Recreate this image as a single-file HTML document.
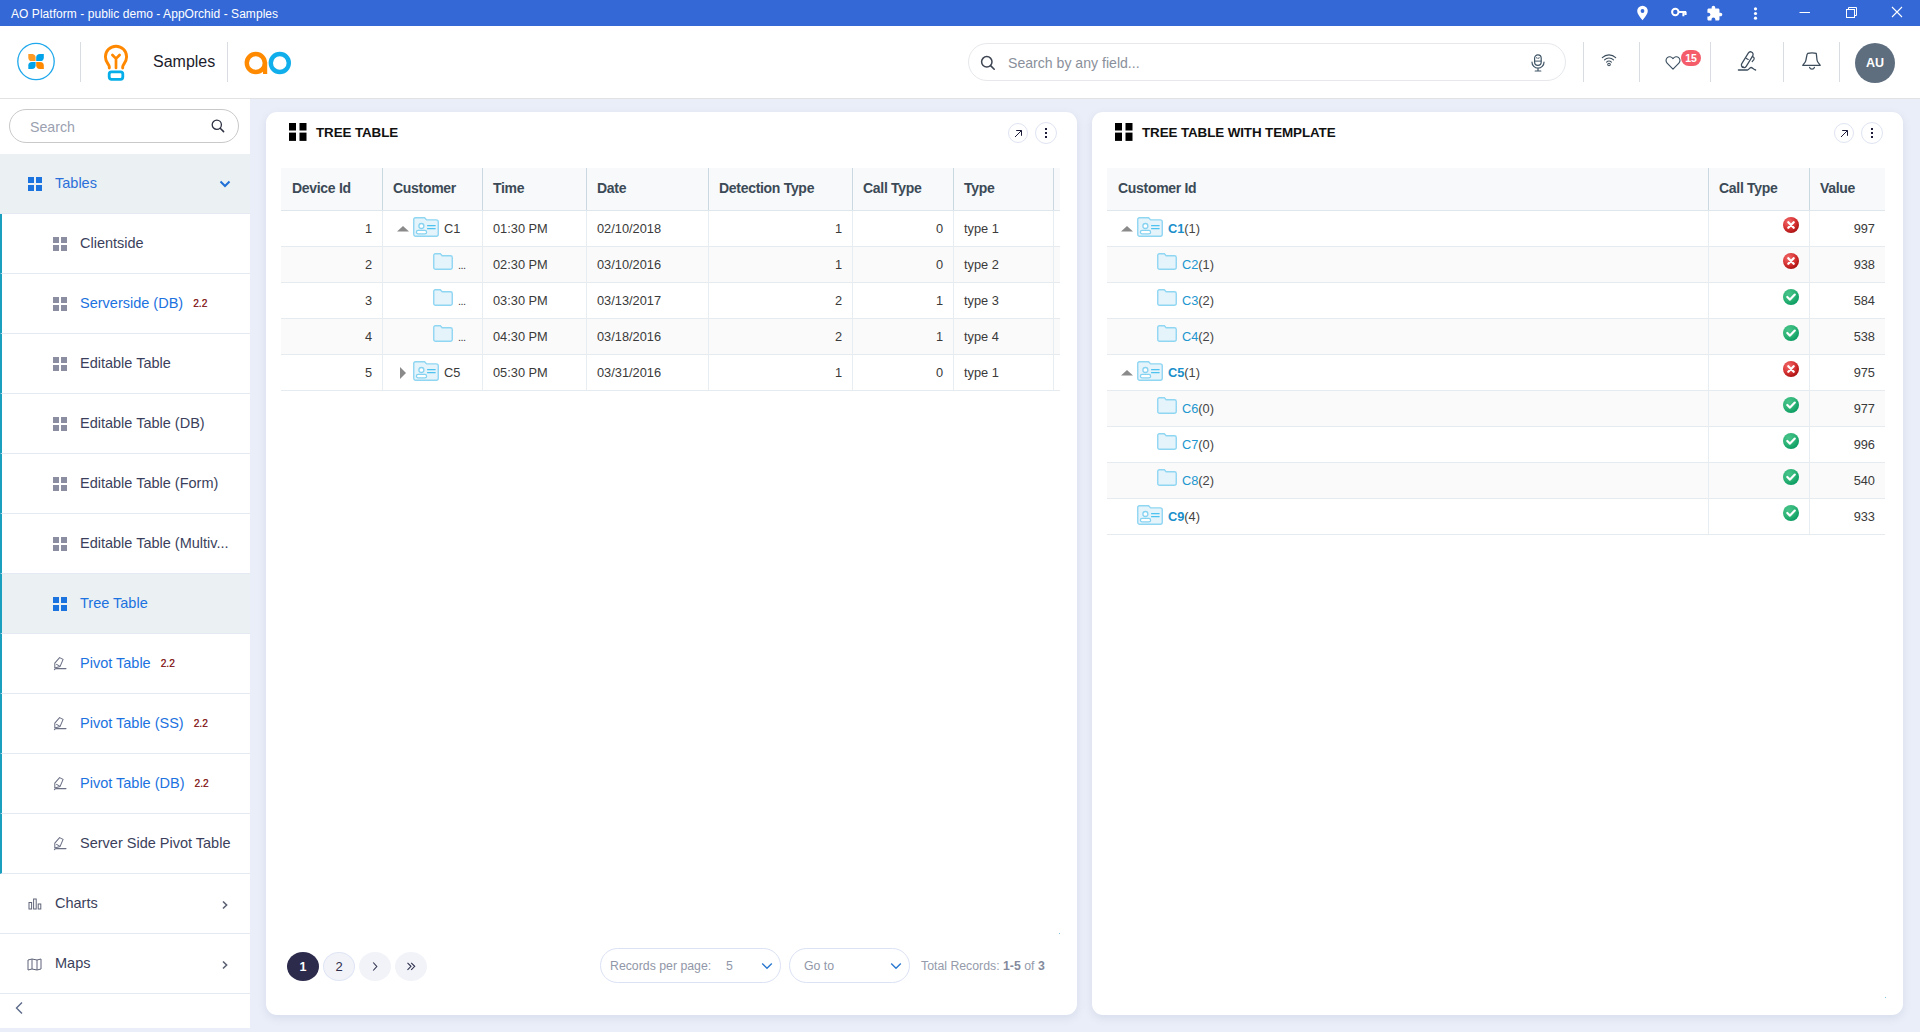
<!DOCTYPE html>
<html><head><meta charset="utf-8">
<style>
*{box-sizing:border-box;margin:0;padding:0}
html,body{width:1920px;height:1032px;overflow:hidden}
body{position:relative;background:#eaeef8;font-family:"Liberation Sans",sans-serif;color:#333}
.abs{position:absolute}
svg{display:block}
/* titlebar */
#tb{position:absolute;left:0;top:0;width:1920px;height:26px;background:#3468d6}
#tb .t{position:absolute;left:11px;top:1px;line-height:26px;font-size:12px;color:#fff;letter-spacing:0.05px}
/* header */
#hd{position:absolute;left:0;top:26px;width:1920px;height:73px;background:#fff;border-bottom:1px solid #e1e2e4}
.vdiv{position:absolute;top:16px;width:1px;height:40px;background:#d9dde2}
/* sidebar */
#sb{position:absolute;left:0;top:99px;width:250px;height:929px;background:#fff}
.si{position:absolute;left:0;width:250px;height:60px;border-bottom:1px solid #e5e9f2;background:#fff}
.si.sub{border-left:2px solid #1a9fbf}
.si .tx{position:absolute;left:80px;top:0;line-height:59px;font-size:14.5px;color:#3b3f5c;white-space:nowrap}
.si .tx.bl{color:#1b72e0}
.si .badge{font-size:10.2px;font-weight:normal;color:#7a0505;margin-left:10px;position:relative;top:-1px;-webkit-text-stroke:0.2px #7a0505}
.si .ic{position:absolute;left:53px;top:23px}
/* cards */
.card{position:absolute;top:112px;width:811px;height:903px;background:#fff;border-radius:11px;box-shadow:0 3px 9px rgba(100,110,170,0.14)}
.card .title{position:absolute;left:50px;top:0;line-height:42px;font-size:13.4px;font-weight:bold;color:#111;letter-spacing:-0.1px}
.abtn{position:absolute;top:10px;width:21px;height:21px;border:1px solid #dfe4f2;border-radius:50%}
/* tables */
.tbl{position:absolute;top:56px}
.th{position:absolute;top:0;height:43px;background:#f7f9fa;border-bottom:1px solid #e0e7ec}
.th .c{position:absolute;top:0;height:42px;border-right:1px solid #cad8e2;font-size:14px;letter-spacing:-0.3px;font-weight:bold;color:#3c4a57;line-height:40px;padding-left:11px;white-space:nowrap}
.tr{position:absolute;height:36px;border-bottom:1px solid #e6ebef}
.tr.alt{background:#fafafa}
.tr .c{position:absolute;top:0;height:35px;border-right:1px solid #e8edf1;font-size:12.8px;color:#3a3a3a;line-height:36px;white-space:nowrap}
.r{text-align:right;padding-right:10px}
.l{padding-left:11px}
.pg{position:absolute;top:840px;width:32px;height:29px;border-radius:50%;background:#f2f3f8;text-align:center;line-height:30px;font-size:13px;color:#2c2d4a}
.pg.act{background:#2c2b4c;color:#fff;font-weight:bold;font-size:12.5px}
.pg.b{border:1px solid #dfe5f5;line-height:28px}
.sel{position:absolute;top:836px;height:35px;border:1px solid #dbe2f4;border-radius:17.5px;font-size:12.3px;color:#9197a8;line-height:35px}
.cn{color:#1a8fca;font-weight:bold}
.cn2{color:#2196cf}
.cc{color:#444}
</style></head><body>

<!-- TITLE BAR -->
<div id="tb"><div class="t">AO Platform - public demo - AppOrchid - Samples</div>
  <svg class="abs" style="left:1636px;top:5px" width="13" height="16" viewBox="0 0 13 16"><path d="M6.5 15.2 C3.2 11.4 1.2 8.6 1.2 6.1 A5.3 5.3 0 0 1 11.8 6.1 C11.8 8.6 9.8 11.4 6.5 15.2 Z" fill="#fff"/><circle cx="6.5" cy="6" r="1.9" fill="#3468d6"/></svg>
  <svg class="abs" style="left:1671px;top:7px" width="16" height="11" viewBox="0 0 16 11"><circle cx="4.3" cy="5" r="3.2" fill="none" stroke="#fff" stroke-width="2"/><path d="M7.2 5 H15.2 M12.4 5 V9.2 M14.6 5 V8" fill="none" stroke="#fff" stroke-width="2"/></svg>
  <svg class="abs" style="left:1706px;top:5px" width="17" height="17" viewBox="0 0 24 24"><path d="M20.5 11H19V7c0-1.1-.9-2-2-2h-4V3.5C13 2.12 11.88 1 10.5 1S8 2.12 8 3.5V5H4c-1.1 0-1.99.9-1.99 2v3.8H3.5c1.49 0 2.7 1.21 2.7 2.7s-1.21 2.7-2.7 2.7H2V20c0 1.1.9 2 2 2h3.8v-1.5c0-1.49 1.21-2.7 2.7-2.7 1.49 0 2.7 1.21 2.7 2.7V22H17c1.1 0 2-.9 2-2v-4h1.5c1.380 0 2.5-1.12 2.5-2.5S21.88 11 20.5 11z" fill="#fff"/></svg>
  <svg class="abs" style="left:1753px;top:7px" width="5" height="13" viewBox="0 0 5 13"><circle cx="2.5" cy="1.8" r="1.6" fill="#fff"/><circle cx="2.5" cy="6.5" r="1.6" fill="#fff"/><circle cx="2.5" cy="11.2" r="1.6" fill="#fff"/></svg>
  <svg class="abs" style="left:1799px;top:11px" width="12" height="3" viewBox="0 0 12 3"><path d="M0.5 1.5 H11" stroke="#fff" stroke-width="1"/></svg>
  <svg class="abs" style="left:1845px;top:6px" width="13" height="12" viewBox="0 0 13 12"><rect x="1.5" y="3.5" width="8" height="8" fill="none" stroke="#fff" stroke-width="1"/><path d="M3.5 3.5 V1.5 H11.5 V9.5 H9.5" fill="none" stroke="#fff" stroke-width="1"/></svg>
  <svg class="abs" style="left:1891px;top:6px" width="12" height="12" viewBox="0 0 12 12"><path d="M1 1 L11 11 M11 1 L1 11" stroke="#fff" stroke-width="1.1"/></svg>
</div>

<!-- HEADER -->
<div id="hd">
  <!-- app circle -->
  <svg class="abs" style="left:16px;top:16px" width="40" height="40" viewBox="0 0 40 40">
    <circle cx="20" cy="19.5" r="18.2" fill="none" stroke="#1fa8ec" stroke-width="1.3"/>
    <path d="M12.3 12 H16.6 A3.6 3.6 0 0 1 19.6 15.6 V19 H15.9 A3.6 3.6 0 0 1 12.3 15.4 Z" fill="#ff9b24"/>
    <path d="M20.2 15.6 A3.6 3.6 0 0 1 23.8 12 H27.8 V15.4 A3.6 3.6 0 0 1 24.2 19 H20.2 Z" fill="#03a3e9"/>
    <path d="M12.3 23.6 A3.6 3.6 0 0 1 15.9 20 H19.6 V23.3 A3.6 3.6 0 0 1 16 26.9 H12.3 Z" fill="#03a3e9"/>
    <path d="M20.2 20 H24.2 A3.6 3.6 0 0 1 27.8 23.6 V26.9 H23.8 A3.6 3.6 0 0 1 20.2 23.3 Z" fill="#ff8a00"/>
  </svg>
  <div class="vdiv" style="left:80px"></div>
  <!-- bulb -->
  <svg class="abs" style="left:102px;top:17px" width="28" height="38" viewBox="0 0 28 38">
    <path d="M7.3 25 V23.8 C7.3 21.4 3.4 19.4 3.4 13.8 A10.6 10.6 0 0 1 24.6 13.8 C24.6 19.4 20.7 21.4 20.7 23.8 V25" fill="none" stroke="#ff8800" stroke-width="2.9" stroke-linecap="round"/>
    <path d="M14 25 V15.6 M10.4 12 L14 15.6 L17.6 12" fill="none" stroke="#ff8800" stroke-width="2.7" stroke-linecap="round" stroke-linejoin="round"/>
    <rect x="7.2" y="28.9" width="13.6" height="7.4" rx="2.2" fill="none" stroke="#05aee8" stroke-width="2.8"/>
  </svg>
  <div class="abs" style="left:153px;top:0;line-height:72px;font-size:16px;color:#1b1b2b">Samples</div>
  <div class="vdiv" style="left:227px"></div>
  <!-- ao logo -->
  <svg class="abs" style="left:244px;top:25px" width="48" height="24" viewBox="0 0 48 24">
    <circle cx="11.8" cy="12" r="9" fill="none" stroke="#ff8a00" stroke-width="4.4"/>
    <rect x="19" y="11" width="4.2" height="12" fill="#ff8a00"/>
    <circle cx="35.8" cy="12" r="9" fill="none" stroke="#10aeea" stroke-width="4.4"/>
  </svg>
  <!-- search -->
  <div class="abs" style="left:968px;top:17px;width:598px;height:38px;border:1px solid #e6e8eb;border-radius:19px;background:#fff"></div>
  <svg class="abs" style="left:980px;top:29px" width="16" height="16" viewBox="0 0 16 16">
    <circle cx="6.8" cy="6.8" r="5.2" fill="none" stroke="#3d4452" stroke-width="1.5"/>
    <path d="M10.6 10.6 L14.2 14.2" stroke="#3d4452" stroke-width="1.6" stroke-linecap="round"/>
  </svg>
  <div class="abs" style="left:1008px;top:18px;line-height:38px;font-size:14.1px;color:#8a909b">Search by any field...</div>
  <!-- mic -->
  <svg class="abs" style="left:1529px;top:27px" width="18" height="20" viewBox="0 0 18 20"><rect x="5.6" y="1.9" width="6.6" height="10.4" rx="3.3" fill="none" stroke="#3f5466" stroke-width="1.2"/><path d="M5.6 8.1 H12.2 M7.6 4.2 L8.2 5.8 M10.2 4.2 L9.6 5.8" fill="none" stroke="#3f5466" stroke-width="1"/><path d="M3 9.2 A6 6 0 0 0 15 9.2 M9 15.2 V17.8 M6.2 18 H11.8" fill="none" stroke="#3f5466" stroke-width="1.2" stroke-linecap="round"/></svg>
  <div class="vdiv" style="left:1583px"></div>
  <!-- wifi -->
  <svg class="abs" style="left:1600px;top:26px" width="18" height="15" viewBox="0 0 18 15"><path d="M2.3 5.6 A9.6 9.6 0 0 1 15.7 5.6 M4.5 7.9 A6.4 6.4 0 0 1 13.5 7.9 M6.6 10.1 A3.3 3.3 0 0 1 11.4 10.1" fill="none" stroke="#3e4f5e" stroke-width="1.1" stroke-linecap="round"/><circle cx="9" cy="12.5" r="1.3" fill="none" stroke="#3e4f5e" stroke-width="1.05"/></svg>
  <div class="vdiv" style="left:1639px"></div>
  <!-- heart -->
  <svg class="abs" style="left:1664px;top:28px" width="18" height="17" viewBox="0 0 18 17"><path d="M9 15.2 L3.1 9.1 C1.6 7.5 1.7 5 3.3 3.6 C4.9 2.2 7.4 2.5 9 4.6 C10.6 2.5 13.1 2.2 14.7 3.6 C16.3 5 16.4 7.5 14.9 9.1 Z" fill="none" stroke="#3c4f60" stroke-width="1.15" stroke-linejoin="round"/></svg>
  <div class="abs" style="left:1681px;top:24px;width:20px;height:16px;border-radius:8px;background:#f55c6a;color:#fff;font-size:10.5px;font-weight:bold;text-align:center;line-height:16px">15</div>
  <div class="vdiv" style="left:1710px"></div>
  <!-- pen -->
  <svg class="abs" style="left:1736px;top:24px" width="22" height="22" viewBox="0 0 22 22"><path d="M12.29 3.13 A2.6 2.6 0 0 1 16.71 5.87 L10.21 16.37 A2.6 2.6 0 0 1 5.79 13.63 Z" fill="none" stroke="#3d4d5c" stroke-width="1.25"/><path d="M10.4 8.4 L12.2 9.4 M16.4 6.6 C18 7 18.6 8.4 17.8 9.6 L16.2 11.6 M6.4 17.4 L7.1 16.4" fill="none" stroke="#3d4d5c" stroke-width="1.2" stroke-linecap="round"/><path d="M2.4 20 H11.4 C12.6 20 13.6 17.5 15 17.5 C16.4 17.5 17.4 19.4 19.6 20" fill="none" stroke="#3d4d5c" stroke-width="1.3" stroke-linecap="round"/></svg>
  <div class="vdiv" style="left:1783px"></div>
  <!-- bell -->
  <svg class="abs" style="left:1801px;top:24px" width="21" height="22" viewBox="0 0 21 22"><path d="M6.8 3.3 C8.5 2.6 13.5 2.6 15.2 3.3 C15.7 4.2 15.4 9.5 16.6 11.8 C17.4 13.3 19 14.3 19.2 15.4 H1.8 C2 14.3 3.6 13.3 4.4 11.8 C5.6 9.5 5.3 4.2 6.8 3.3 Z" fill="none" stroke="#3d4d5c" stroke-width="1.3" stroke-linejoin="round"/><path d="M8.6 17.4 A2.5 2.5 0 0 0 13.4 17.4" fill="none" stroke="#3d4d5c" stroke-width="1.3" stroke-linecap="round"/></svg>
  <div class="vdiv" style="left:1839px"></div>
  <div class="abs" style="left:1855px;top:17px;width:40px;height:40px;border-radius:50%;background:#5f6e7f;color:#fff;font-size:12.5px;font-weight:bold;text-align:center;line-height:40px">AU</div>
</div>

<!-- SIDEBAR -->
<div id="sb">
<div class="abs" style="left:9px;top:10px;width:230px;height:34px;border:1px solid #c9c9c9;border-radius:17px"></div>
<div class="abs" style="left:30px;top:11px;line-height:34px;font-size:14.2px;color:#9ba1b0">Search</div>
<svg class="abs" style="left:211px;top:20px" width="14" height="14" viewBox="0 0 14 14"><circle cx="5.8" cy="5.8" r="4.6" fill="none" stroke="#2d3142" stroke-width="1.3"/><path d="M9.2 9.2 L12.6 12.6" stroke="#2d3142" stroke-width="1.5" stroke-linecap="round"/></svg>
<div class="si" style="top:55px;background:#ebf0f3"><svg class="ic" style="left:28px;top:23px" width="14" height="14" viewBox="0 0 14 14"><rect x="0" y="0" width="6" height="6" fill="#1b73e0"/><rect x="8" y="0" width="6" height="6" fill="#1b73e0"/><rect x="0" y="8" width="6" height="6" fill="#1b73e0"/><rect x="8" y="8" width="6" height="6" fill="#1b73e0"/></svg><div class="tx bl" style="left:55px;color:#2a6fd9">Tables</div><svg class="abs" style="left:219px;top:26px" width="12" height="8" viewBox="0 0 12 8"><path d="M1.5 1.5 L6 6 L10.5 1.5" fill="none" stroke="#1f6fd6" stroke-width="2"/></svg></div>
<div class="si sub" style="top:115px"><svg class="ic" style="left:51px;top:23px" width="14" height="14" viewBox="0 0 14 14"><rect x="0" y="0" width="6" height="6" fill="#8a8ea0"/><rect x="8" y="0" width="6" height="6" fill="#8a8ea0"/><rect x="0" y="8" width="6" height="6" fill="#8a8ea0"/><rect x="8" y="8" width="6" height="6" fill="#8a8ea0"/></svg><div class="tx" style="left:78px">Clientside</div></div>
<div class="si sub" style="top:175px"><svg class="ic" style="left:51px;top:23px" width="14" height="14" viewBox="0 0 14 14"><rect x="0" y="0" width="6" height="6" fill="#8a8ea0"/><rect x="8" y="0" width="6" height="6" fill="#8a8ea0"/><rect x="0" y="8" width="6" height="6" fill="#8a8ea0"/><rect x="8" y="8" width="6" height="6" fill="#8a8ea0"/></svg><div class="tx bl" style="left:78px">Serverside (DB)<span class="badge">2.2</span></div></div>
<div class="si sub" style="top:235px"><svg class="ic" style="left:51px;top:23px" width="14" height="14" viewBox="0 0 14 14"><rect x="0" y="0" width="6" height="6" fill="#8a8ea0"/><rect x="8" y="0" width="6" height="6" fill="#8a8ea0"/><rect x="0" y="8" width="6" height="6" fill="#8a8ea0"/><rect x="8" y="8" width="6" height="6" fill="#8a8ea0"/></svg><div class="tx" style="left:78px">Editable Table</div></div>
<div class="si sub" style="top:295px"><svg class="ic" style="left:51px;top:23px" width="14" height="14" viewBox="0 0 14 14"><rect x="0" y="0" width="6" height="6" fill="#8a8ea0"/><rect x="8" y="0" width="6" height="6" fill="#8a8ea0"/><rect x="0" y="8" width="6" height="6" fill="#8a8ea0"/><rect x="8" y="8" width="6" height="6" fill="#8a8ea0"/></svg><div class="tx" style="left:78px">Editable Table (DB)</div></div>
<div class="si sub" style="top:355px"><svg class="ic" style="left:51px;top:23px" width="14" height="14" viewBox="0 0 14 14"><rect x="0" y="0" width="6" height="6" fill="#8a8ea0"/><rect x="8" y="0" width="6" height="6" fill="#8a8ea0"/><rect x="0" y="8" width="6" height="6" fill="#8a8ea0"/><rect x="8" y="8" width="6" height="6" fill="#8a8ea0"/></svg><div class="tx" style="left:78px">Editable Table (Form)</div></div>
<div class="si sub" style="top:415px"><svg class="ic" style="left:51px;top:23px" width="14" height="14" viewBox="0 0 14 14"><rect x="0" y="0" width="6" height="6" fill="#8a8ea0"/><rect x="8" y="0" width="6" height="6" fill="#8a8ea0"/><rect x="0" y="8" width="6" height="6" fill="#8a8ea0"/><rect x="8" y="8" width="6" height="6" fill="#8a8ea0"/></svg><div class="tx" style="left:78px">Editable Table (Multiv...</div></div>
<div class="si sub" style="top:475px;background:#ebf0f3"><svg class="ic" style="left:51px;top:23px" width="14" height="14" viewBox="0 0 14 14"><rect x="0" y="0" width="6" height="6" fill="#1b73e0"/><rect x="8" y="0" width="6" height="6" fill="#1b73e0"/><rect x="0" y="8" width="6" height="6" fill="#1b73e0"/><rect x="8" y="8" width="6" height="6" fill="#1b73e0"/></svg><div class="tx bl" style="left:78px">Tree Table</div></div>
<div class="si sub" style="top:535px"><svg class="ic" style="left:46px;top:18px" width="24" height="24" viewBox="0 0 24 24"><path d="M11.6 5.6 L15.1 7.4 L12.1 14.4 L6.8 15.9 L6.8 11.2 Z" fill="none" stroke="#6a6f84" stroke-width="1.05" stroke-linejoin="round"/><path d="M8.6 12.4 L11.6 14.1 M8.4 16.6 H18 M6.4 17.6 Q7.4 16.5 9 16.6" fill="none" stroke="#6a6f84" stroke-width="1.05" stroke-linecap="round"/></svg><div class="tx bl" style="left:78px">Pivot Table<span class="badge">2.2</span></div></div>
<div class="si sub" style="top:595px"><svg class="ic" style="left:46px;top:18px" width="24" height="24" viewBox="0 0 24 24"><path d="M11.6 5.6 L15.1 7.4 L12.1 14.4 L6.8 15.9 L6.8 11.2 Z" fill="none" stroke="#6a6f84" stroke-width="1.05" stroke-linejoin="round"/><path d="M8.6 12.4 L11.6 14.1 M8.4 16.6 H18 M6.4 17.6 Q7.4 16.5 9 16.6" fill="none" stroke="#6a6f84" stroke-width="1.05" stroke-linecap="round"/></svg><div class="tx bl" style="left:78px">Pivot Table (SS)<span class="badge">2.2</span></div></div>
<div class="si sub" style="top:655px"><svg class="ic" style="left:46px;top:18px" width="24" height="24" viewBox="0 0 24 24"><path d="M11.6 5.6 L15.1 7.4 L12.1 14.4 L6.8 15.9 L6.8 11.2 Z" fill="none" stroke="#6a6f84" stroke-width="1.05" stroke-linejoin="round"/><path d="M8.6 12.4 L11.6 14.1 M8.4 16.6 H18 M6.4 17.6 Q7.4 16.5 9 16.6" fill="none" stroke="#6a6f84" stroke-width="1.05" stroke-linecap="round"/></svg><div class="tx bl" style="left:78px">Pivot Table (DB)<span class="badge">2.2</span></div></div>
<div class="si sub" style="top:715px"><svg class="ic" style="left:46px;top:18px" width="24" height="24" viewBox="0 0 24 24"><path d="M11.6 5.6 L15.1 7.4 L12.1 14.4 L6.8 15.9 L6.8 11.2 Z" fill="none" stroke="#6a6f84" stroke-width="1.05" stroke-linejoin="round"/><path d="M8.6 12.4 L11.6 14.1 M8.4 16.6 H18 M6.4 17.6 Q7.4 16.5 9 16.6" fill="none" stroke="#6a6f84" stroke-width="1.05" stroke-linecap="round"/></svg><div class="tx" style="left:78px">Server Side Pivot Table</div></div>
<div class="si" style="top:775px"><svg class="abs" style="left:28px;top:24px" width="14" height="12" viewBox="0 0 14 12"><rect x="1" y="4.5" width="2.6" height="6.5" fill="none" stroke="#5f6478" stroke-width="1"/><rect x="5.6" y="1" width="2.6" height="10" fill="none" stroke="#5f6478" stroke-width="1"/><rect x="10.2" y="6" width="2.6" height="5" fill="none" stroke="#5f6478" stroke-width="1"/></svg><div class="tx" style="left:55px">Charts</div><svg class="abs" style="left:221px;top:26px" width="8" height="10" viewBox="0 0 8 10"><path d="M2 1.5 L5.6 5 L2 8.5" fill="none" stroke="#5c6273" stroke-width="1.6"/></svg></div>
<div class="si" style="top:835px"><svg class="abs" style="left:27px;top:24px" width="15" height="13" viewBox="0 0 15 13"><path d="M1 2 L5 1 L10 2 L14 1 V11 L10 12 L5 11 L1 12 Z M5 1 V11 M10 2 V12" fill="none" stroke="#5f6478" stroke-width="1" stroke-linejoin="round"/></svg><div class="tx" style="left:55px">Maps</div><svg class="abs" style="left:221px;top:26px" width="8" height="10" viewBox="0 0 8 10"><path d="M2 1.5 L5.6 5 L2 8.5" fill="none" stroke="#5c6273" stroke-width="1.6"/></svg></div>
<svg class="abs" style="left:14px;top:902px" width="10" height="14" viewBox="0 0 10 14"><path d="M8 1.5 L2.5 7 L8 12.5" fill="none" stroke="#5a6a8a" stroke-width="1.4"/></svg>
</div>

<!-- LEFT CARD -->
<div class="card" id="c1" style="left:266px">
<svg class="abs" style="left:23px;top:11px" width="18" height="18" viewBox="0 0 18 18"><rect x="0" y="0" width="7" height="7.5" fill="#000"/><rect x="10.5" y="0" width="7" height="7.5" fill="#000"/><rect x="0" y="9.6" width="7" height="8.3" fill="#000"/><rect x="10.5" y="9.6" width="7" height="8.3" fill="#000"/></svg>
<div class="title" style="left:50px;top:0px">TREE TABLE</div>
<div class="abtn" style="left:742px;top:11px;width:20px;height:20px"></div>
<svg class="abs" style="left:748px;top:17px" width="9" height="9" viewBox="0 0 9 9"><path d="M1 8 L7.4 1.6 M2.2 1.5 H7.5 V6.8" fill="none" stroke="#1d1d3a" stroke-width="1"/></svg>
<div class="abtn" style="left:769px;top:10px;width:22px;height:22px"></div>
<svg class="abs" style="left:778px;top:15px" width="4" height="12" viewBox="0 0 4 12"><rect x="1" y="1" width="2" height="2" fill="#1d1d3a"/><rect x="1" y="5" width="2" height="2" fill="#1d1d3a"/><rect x="1" y="9" width="2" height="2" fill="#1d1d3a"/></svg>
<div class="th" style="left:15px;top:56px;width:779px">
<div class="c" style="left:0px;width:102px">Device Id</div>
<div class="c" style="left:101px;width:101px">Customer</div>
<div class="c" style="left:201px;width:105px">Time</div>
<div class="c" style="left:305px;width:123px">Date</div>
<div class="c" style="left:427px;width:145px">Detection Type</div>
<div class="c" style="left:571px;width:102px">Call Type</div>
<div class="c" style="left:672px;width:101px">Type</div>
<div class="c" style="left:772px;width:7px;border-right:none"></div>
</div>
<div class="tr" style="left:15px;top:99px;width:779px">
<div class="c r" style="left:0px;width:102px">1</div>
<div class="c" style="left:101px;width:101px"><svg class="abs" style="left:15px;top:15px" width="12" height="6" viewBox="0 0 12 6"><path d="M0 5.5 L6 0 L12 5.5 Z" fill="#8a8a8a"/></svg><svg class="abs" style="left:31px;top:6px" width="26" height="20" viewBox="0 0 26 20"><path d="M2.6 0.75 H11.6 L13.6 2.9 H23.3 A1.95 1.95 0 0 1 25.25 4.85 V17.3 A1.95 1.95 0 0 1 23.3 19.25 H2.7 A1.95 1.95 0 0 1 0.75 17.3 V2.6 A1.85 1.85 0 0 1 2.6 0.75 Z" fill="#e5f4fb" stroke="#8fd6f3" stroke-width="1.4"/><circle cx="8.4" cy="9" r="2.5" fill="#fff" stroke="#86d2f1" stroke-width="1.3"/><rect x="3.4" y="13.4" width="10.2" height="3.5" rx="1.75" fill="#fff" stroke="#86d2f1" stroke-width="1.3"/><path d="M14.1 8.6 H22.6 M14.1 11.7 H22.6" stroke="#4ec3ef" stroke-width="1.3"/></svg><div class="abs" style="left:62px;top:0;line-height:35px">C1</div></div>
<div class="c l" style="left:201px;width:105px">01:30 PM</div>
<div class="c l" style="left:305px;width:123px">02/10/2018</div>
<div class="c r" style="left:427px;width:145px">1</div>
<div class="c r" style="left:571px;width:102px">0</div>
<div class="c l" style="left:672px;width:101px">type 1</div>
<div class="c" style="left:772px;width:7px;border-right:none"></div>
</div>
<div class="tr alt" style="left:15px;top:135px;width:779px">
<div class="c r" style="left:0px;width:102px">2</div>
<div class="c" style="left:101px;width:101px"><svg class="abs" style="left:51px;top:6px" width="20" height="17" viewBox="0 0 20 17"><path d="M2.3 0.75 H7.3 L9.2 2.7 H17.5 A1.75 1.75 0 0 1 19.25 4.45 V14.5 A1.75 1.75 0 0 1 17.5 16.25 H2.5 A1.75 1.75 0 0 1 0.75 14.5 V2.3 A1.55 1.55 0 0 1 2.3 0.75 Z" fill="#e5f4fb" stroke="#8fd6f3" stroke-width="1.4"/></svg><div class="abs" style="left:76px;top:1px;line-height:35px;font-size:11px;letter-spacing:-0.5px">...</div></div>
<div class="c l" style="left:201px;width:105px">02:30 PM</div>
<div class="c l" style="left:305px;width:123px">03/10/2016</div>
<div class="c r" style="left:427px;width:145px">1</div>
<div class="c r" style="left:571px;width:102px">0</div>
<div class="c l" style="left:672px;width:101px">type 2</div>
<div class="c" style="left:772px;width:7px;border-right:none"></div>
</div>
<div class="tr" style="left:15px;top:171px;width:779px">
<div class="c r" style="left:0px;width:102px">3</div>
<div class="c" style="left:101px;width:101px"><svg class="abs" style="left:51px;top:6px" width="20" height="17" viewBox="0 0 20 17"><path d="M2.3 0.75 H7.3 L9.2 2.7 H17.5 A1.75 1.75 0 0 1 19.25 4.45 V14.5 A1.75 1.75 0 0 1 17.5 16.25 H2.5 A1.75 1.75 0 0 1 0.75 14.5 V2.3 A1.55 1.55 0 0 1 2.3 0.75 Z" fill="#e5f4fb" stroke="#8fd6f3" stroke-width="1.4"/></svg><div class="abs" style="left:76px;top:1px;line-height:35px;font-size:11px;letter-spacing:-0.5px">...</div></div>
<div class="c l" style="left:201px;width:105px">03:30 PM</div>
<div class="c l" style="left:305px;width:123px">03/13/2017</div>
<div class="c r" style="left:427px;width:145px">2</div>
<div class="c r" style="left:571px;width:102px">1</div>
<div class="c l" style="left:672px;width:101px">type 3</div>
<div class="c" style="left:772px;width:7px;border-right:none"></div>
</div>
<div class="tr alt" style="left:15px;top:207px;width:779px">
<div class="c r" style="left:0px;width:102px">4</div>
<div class="c" style="left:101px;width:101px"><svg class="abs" style="left:51px;top:6px" width="20" height="17" viewBox="0 0 20 17"><path d="M2.3 0.75 H7.3 L9.2 2.7 H17.5 A1.75 1.75 0 0 1 19.25 4.45 V14.5 A1.75 1.75 0 0 1 17.5 16.25 H2.5 A1.75 1.75 0 0 1 0.75 14.5 V2.3 A1.55 1.55 0 0 1 2.3 0.75 Z" fill="#e5f4fb" stroke="#8fd6f3" stroke-width="1.4"/></svg><div class="abs" style="left:76px;top:1px;line-height:35px;font-size:11px;letter-spacing:-0.5px">...</div></div>
<div class="c l" style="left:201px;width:105px">04:30 PM</div>
<div class="c l" style="left:305px;width:123px">03/18/2016</div>
<div class="c r" style="left:427px;width:145px">2</div>
<div class="c r" style="left:571px;width:102px">1</div>
<div class="c l" style="left:672px;width:101px">type 4</div>
<div class="c" style="left:772px;width:7px;border-right:none"></div>
</div>
<div class="tr" style="left:15px;top:243px;width:779px">
<div class="c r" style="left:0px;width:102px">5</div>
<div class="c" style="left:101px;width:101px"><svg class="abs" style="left:18px;top:12px" width="6" height="12" viewBox="0 0 6 12"><path d="M0 0 L6 6 L0 12 Z" fill="#8a8a8a"/></svg><svg class="abs" style="left:31px;top:6px" width="26" height="20" viewBox="0 0 26 20"><path d="M2.6 0.75 H11.6 L13.6 2.9 H23.3 A1.95 1.95 0 0 1 25.25 4.85 V17.3 A1.95 1.95 0 0 1 23.3 19.25 H2.7 A1.95 1.95 0 0 1 0.75 17.3 V2.6 A1.85 1.85 0 0 1 2.6 0.75 Z" fill="#e5f4fb" stroke="#8fd6f3" stroke-width="1.4"/><circle cx="8.4" cy="9" r="2.5" fill="#fff" stroke="#86d2f1" stroke-width="1.3"/><rect x="3.4" y="13.4" width="10.2" height="3.5" rx="1.75" fill="#fff" stroke="#86d2f1" stroke-width="1.3"/><path d="M14.1 8.6 H22.6 M14.1 11.7 H22.6" stroke="#4ec3ef" stroke-width="1.3"/></svg><div class="abs" style="left:62px;top:0;line-height:35px">C5</div></div>
<div class="c l" style="left:201px;width:105px">05:30 PM</div>
<div class="c l" style="left:305px;width:123px">03/31/2016</div>
<div class="c r" style="left:427px;width:145px">1</div>
<div class="c r" style="left:571px;width:102px">0</div>
<div class="c l" style="left:672px;width:101px">type 1</div>
<div class="c" style="left:772px;width:7px;border-right:none"></div>
</div>
<div class="pg act" style="left:21px">1</div>
<div class="pg b" style="left:57px">2</div>
<div class="pg" style="left:93px"><svg style="position:absolute;left:12px;top:9px" width="8" height="11" viewBox="0 0 8 11"><path d="M2.2 1.5 L5.8 5.5 L2.2 9.5" fill="none" stroke="#2f3350" stroke-width="1.1"/></svg></div>
<div class="pg" style="left:129px"><svg style="position:absolute;left:11px;top:9px" width="11" height="11" viewBox="0 0 11 11"><path d="M1.5 1.8 L5 5.3 L1.5 8.8 M5.2 1.8 L8.7 5.3 L5.2 8.8" fill="none" stroke="#2f3350" stroke-width="1.1"/></svg></div>
<div class="sel" style="left:334px;width:181px"><span style="position:absolute;left:9px">Records per page:</span><span style="position:absolute;left:125px">5</span><svg style="position:absolute;left:160px;top:13px" width="12" height="8" viewBox="0 0 12 8"><path d="M1.2 1.5 L6 6.2 L10.8 1.5" fill="none" stroke="#2a78d0" stroke-width="1.4"/></svg></div>
<div class="sel" style="left:523px;width:121px"><span style="position:absolute;left:14px">Go to</span><svg style="position:absolute;left:100px;top:13px" width="12" height="8" viewBox="0 0 12 8"><path d="M1.2 1.5 L6 6.2 L10.8 1.5" fill="none" stroke="#2a78d0" stroke-width="1.4"/></svg></div>
<div class="abs" style="left:655px;top:836px;line-height:37px;font-size:12.3px;color:#959bab;white-space:nowrap">Total Records: <b style="color:#858b9c">1-5</b> of <b style="color:#858b9c">3</b></div>
</div>

<!-- RIGHT CARD -->
<div class="card" id="c2" style="left:1092px">
<svg class="abs" style="left:23px;top:11px" width="18" height="18" viewBox="0 0 18 18"><rect x="0" y="0" width="7" height="7.5" fill="#000"/><rect x="10.5" y="0" width="7" height="7.5" fill="#000"/><rect x="0" y="9.6" width="7" height="8.3" fill="#000"/><rect x="10.5" y="9.6" width="7" height="8.3" fill="#000"/></svg>
<div class="title" style="left:50px;top:0px">TREE TABLE WITH TEMPLATE</div>
<div class="abtn" style="left:742px;top:11px;width:20px;height:20px"></div>
<svg class="abs" style="left:748px;top:17px" width="9" height="9" viewBox="0 0 9 9"><path d="M1 8 L7.4 1.6 M2.2 1.5 H7.5 V6.8" fill="none" stroke="#1d1d3a" stroke-width="1"/></svg>
<div class="abtn" style="left:769px;top:10px;width:22px;height:22px"></div>
<svg class="abs" style="left:778px;top:15px" width="4" height="12" viewBox="0 0 4 12"><rect x="1" y="1" width="2" height="2" fill="#1d1d3a"/><rect x="1" y="5" width="2" height="2" fill="#1d1d3a"/><rect x="1" y="9" width="2" height="2" fill="#1d1d3a"/></svg>
<div class="th" style="left:15px;top:56px;width:778px">
<div class="c" style="left:0px;width:602px">Customer Id</div>
<div class="c" style="left:601px;width:102px">Call Type</div>
<div class="c" style="left:702px;width:76px;border-right:none">Value</div>
</div>
<div class="tr" style="left:15px;top:99px;width:778px">
<div class="c" style="left:0;width:602px"><svg class="abs" style="left:14px;top:15px" width="12" height="6" viewBox="0 0 12 6"><path d="M0 5.5 L6 0 L12 5.5 Z" fill="#8a8a8a"/></svg><svg class="abs" style="left:30px;top:6px" width="26" height="20" viewBox="0 0 26 20"><path d="M2.6 0.75 H11.6 L13.6 2.9 H23.3 A1.95 1.95 0 0 1 25.25 4.85 V17.3 A1.95 1.95 0 0 1 23.3 19.25 H2.7 A1.95 1.95 0 0 1 0.75 17.3 V2.6 A1.85 1.85 0 0 1 2.6 0.75 Z" fill="#e5f4fb" stroke="#8fd6f3" stroke-width="1.4"/><circle cx="8.4" cy="9" r="2.5" fill="#fff" stroke="#86d2f1" stroke-width="1.3"/><rect x="3.4" y="13.4" width="10.2" height="3.5" rx="1.75" fill="#fff" stroke="#86d2f1" stroke-width="1.3"/><path d="M14.1 8.6 H22.6 M14.1 11.7 H22.6" stroke="#4ec3ef" stroke-width="1.3"/></svg><div class="abs" style="left:61px;top:0;line-height:36px"><b class="cn">C1</b><span class="cc">(1)</span></div></div>
<div class="c" style="left:601px;width:102px"><svg class="abs" style="left:75px;top:6px" width="16" height="16" viewBox="0 0 16 16"><defs><radialGradient id="rg0" cx="35%" cy="30%" r="75%"><stop offset="0" stop-color="#f26a6a"/><stop offset="0.55" stop-color="#d93636"/><stop offset="1" stop-color="#a80e0e"/></radialGradient></defs><circle cx="8" cy="8" r="8" fill="url(#rg0)"/><path d="M5.3 5.3 L10.7 10.7 M10.7 5.3 L5.3 10.7" stroke="#fff" stroke-width="2.3" stroke-linecap="round"/></svg></div>
<div class="c r" style="left:702px;width:76px;border-right:none">997</div>
</div>
<div class="tr alt" style="left:15px;top:135px;width:778px">
<div class="c" style="left:0;width:602px"><svg class="abs" style="left:50px;top:6px" width="20" height="17" viewBox="0 0 20 17"><path d="M2.3 0.75 H7.3 L9.2 2.7 H17.5 A1.75 1.75 0 0 1 19.25 4.45 V14.5 A1.75 1.75 0 0 1 17.5 16.25 H2.5 A1.75 1.75 0 0 1 0.75 14.5 V2.3 A1.55 1.55 0 0 1 2.3 0.75 Z" fill="#e5f4fb" stroke="#8fd6f3" stroke-width="1.4"/></svg><div class="abs" style="left:75px;top:0;line-height:36px"><span class="cn2">C2</span><span class="cc">(1)</span></div></div>
<div class="c" style="left:601px;width:102px"><svg class="abs" style="left:75px;top:6px" width="16" height="16" viewBox="0 0 16 16"><defs><radialGradient id="rg1" cx="35%" cy="30%" r="75%"><stop offset="0" stop-color="#f26a6a"/><stop offset="0.55" stop-color="#d93636"/><stop offset="1" stop-color="#a80e0e"/></radialGradient></defs><circle cx="8" cy="8" r="8" fill="url(#rg1)"/><path d="M5.3 5.3 L10.7 10.7 M10.7 5.3 L5.3 10.7" stroke="#fff" stroke-width="2.3" stroke-linecap="round"/></svg></div>
<div class="c r" style="left:702px;width:76px;border-right:none">938</div>
</div>
<div class="tr" style="left:15px;top:171px;width:778px">
<div class="c" style="left:0;width:602px"><svg class="abs" style="left:50px;top:6px" width="20" height="17" viewBox="0 0 20 17"><path d="M2.3 0.75 H7.3 L9.2 2.7 H17.5 A1.75 1.75 0 0 1 19.25 4.45 V14.5 A1.75 1.75 0 0 1 17.5 16.25 H2.5 A1.75 1.75 0 0 1 0.75 14.5 V2.3 A1.55 1.55 0 0 1 2.3 0.75 Z" fill="#e5f4fb" stroke="#8fd6f3" stroke-width="1.4"/></svg><div class="abs" style="left:75px;top:0;line-height:36px"><span class="cn2">C3</span><span class="cc">(2)</span></div></div>
<div class="c" style="left:601px;width:102px"><svg class="abs" style="left:75px;top:6px" width="16" height="16" viewBox="0 0 16 16"><defs><radialGradient id="gg2" cx="35%" cy="30%" r="75%"><stop offset="0" stop-color="#47c48a"/><stop offset="0.55" stop-color="#2fb477"/><stop offset="1" stop-color="#079a60"/></radialGradient></defs><circle cx="8" cy="8" r="8" fill="url(#gg2)"/><path d="M4.3 8 L7 10.6 L11.8 5.6" fill="none" stroke="#fff" stroke-width="2.2" stroke-linecap="round" stroke-linejoin="round"/></svg></div>
<div class="c r" style="left:702px;width:76px;border-right:none">584</div>
</div>
<div class="tr alt" style="left:15px;top:207px;width:778px">
<div class="c" style="left:0;width:602px"><svg class="abs" style="left:50px;top:6px" width="20" height="17" viewBox="0 0 20 17"><path d="M2.3 0.75 H7.3 L9.2 2.7 H17.5 A1.75 1.75 0 0 1 19.25 4.45 V14.5 A1.75 1.75 0 0 1 17.5 16.25 H2.5 A1.75 1.75 0 0 1 0.75 14.5 V2.3 A1.55 1.55 0 0 1 2.3 0.75 Z" fill="#e5f4fb" stroke="#8fd6f3" stroke-width="1.4"/></svg><div class="abs" style="left:75px;top:0;line-height:36px"><span class="cn2">C4</span><span class="cc">(2)</span></div></div>
<div class="c" style="left:601px;width:102px"><svg class="abs" style="left:75px;top:6px" width="16" height="16" viewBox="0 0 16 16"><defs><radialGradient id="gg3" cx="35%" cy="30%" r="75%"><stop offset="0" stop-color="#47c48a"/><stop offset="0.55" stop-color="#2fb477"/><stop offset="1" stop-color="#079a60"/></radialGradient></defs><circle cx="8" cy="8" r="8" fill="url(#gg3)"/><path d="M4.3 8 L7 10.6 L11.8 5.6" fill="none" stroke="#fff" stroke-width="2.2" stroke-linecap="round" stroke-linejoin="round"/></svg></div>
<div class="c r" style="left:702px;width:76px;border-right:none">538</div>
</div>
<div class="tr" style="left:15px;top:243px;width:778px">
<div class="c" style="left:0;width:602px"><svg class="abs" style="left:14px;top:15px" width="12" height="6" viewBox="0 0 12 6"><path d="M0 5.5 L6 0 L12 5.5 Z" fill="#8a8a8a"/></svg><svg class="abs" style="left:30px;top:6px" width="26" height="20" viewBox="0 0 26 20"><path d="M2.6 0.75 H11.6 L13.6 2.9 H23.3 A1.95 1.95 0 0 1 25.25 4.85 V17.3 A1.95 1.95 0 0 1 23.3 19.25 H2.7 A1.95 1.95 0 0 1 0.75 17.3 V2.6 A1.85 1.85 0 0 1 2.6 0.75 Z" fill="#e5f4fb" stroke="#8fd6f3" stroke-width="1.4"/><circle cx="8.4" cy="9" r="2.5" fill="#fff" stroke="#86d2f1" stroke-width="1.3"/><rect x="3.4" y="13.4" width="10.2" height="3.5" rx="1.75" fill="#fff" stroke="#86d2f1" stroke-width="1.3"/><path d="M14.1 8.6 H22.6 M14.1 11.7 H22.6" stroke="#4ec3ef" stroke-width="1.3"/></svg><div class="abs" style="left:61px;top:0;line-height:36px"><b class="cn">C5</b><span class="cc">(1)</span></div></div>
<div class="c" style="left:601px;width:102px"><svg class="abs" style="left:75px;top:6px" width="16" height="16" viewBox="0 0 16 16"><defs><radialGradient id="rg4" cx="35%" cy="30%" r="75%"><stop offset="0" stop-color="#f26a6a"/><stop offset="0.55" stop-color="#d93636"/><stop offset="1" stop-color="#a80e0e"/></radialGradient></defs><circle cx="8" cy="8" r="8" fill="url(#rg4)"/><path d="M5.3 5.3 L10.7 10.7 M10.7 5.3 L5.3 10.7" stroke="#fff" stroke-width="2.3" stroke-linecap="round"/></svg></div>
<div class="c r" style="left:702px;width:76px;border-right:none">975</div>
</div>
<div class="tr alt" style="left:15px;top:279px;width:778px">
<div class="c" style="left:0;width:602px"><svg class="abs" style="left:50px;top:6px" width="20" height="17" viewBox="0 0 20 17"><path d="M2.3 0.75 H7.3 L9.2 2.7 H17.5 A1.75 1.75 0 0 1 19.25 4.45 V14.5 A1.75 1.75 0 0 1 17.5 16.25 H2.5 A1.75 1.75 0 0 1 0.75 14.5 V2.3 A1.55 1.55 0 0 1 2.3 0.75 Z" fill="#e5f4fb" stroke="#8fd6f3" stroke-width="1.4"/></svg><div class="abs" style="left:75px;top:0;line-height:36px"><span class="cn2">C6</span><span class="cc">(0)</span></div></div>
<div class="c" style="left:601px;width:102px"><svg class="abs" style="left:75px;top:6px" width="16" height="16" viewBox="0 0 16 16"><defs><radialGradient id="gg5" cx="35%" cy="30%" r="75%"><stop offset="0" stop-color="#47c48a"/><stop offset="0.55" stop-color="#2fb477"/><stop offset="1" stop-color="#079a60"/></radialGradient></defs><circle cx="8" cy="8" r="8" fill="url(#gg5)"/><path d="M4.3 8 L7 10.6 L11.8 5.6" fill="none" stroke="#fff" stroke-width="2.2" stroke-linecap="round" stroke-linejoin="round"/></svg></div>
<div class="c r" style="left:702px;width:76px;border-right:none">977</div>
</div>
<div class="tr" style="left:15px;top:315px;width:778px">
<div class="c" style="left:0;width:602px"><svg class="abs" style="left:50px;top:6px" width="20" height="17" viewBox="0 0 20 17"><path d="M2.3 0.75 H7.3 L9.2 2.7 H17.5 A1.75 1.75 0 0 1 19.25 4.45 V14.5 A1.75 1.75 0 0 1 17.5 16.25 H2.5 A1.75 1.75 0 0 1 0.75 14.5 V2.3 A1.55 1.55 0 0 1 2.3 0.75 Z" fill="#e5f4fb" stroke="#8fd6f3" stroke-width="1.4"/></svg><div class="abs" style="left:75px;top:0;line-height:36px"><span class="cn2">C7</span><span class="cc">(0)</span></div></div>
<div class="c" style="left:601px;width:102px"><svg class="abs" style="left:75px;top:6px" width="16" height="16" viewBox="0 0 16 16"><defs><radialGradient id="gg6" cx="35%" cy="30%" r="75%"><stop offset="0" stop-color="#47c48a"/><stop offset="0.55" stop-color="#2fb477"/><stop offset="1" stop-color="#079a60"/></radialGradient></defs><circle cx="8" cy="8" r="8" fill="url(#gg6)"/><path d="M4.3 8 L7 10.6 L11.8 5.6" fill="none" stroke="#fff" stroke-width="2.2" stroke-linecap="round" stroke-linejoin="round"/></svg></div>
<div class="c r" style="left:702px;width:76px;border-right:none">996</div>
</div>
<div class="tr alt" style="left:15px;top:351px;width:778px">
<div class="c" style="left:0;width:602px"><svg class="abs" style="left:50px;top:6px" width="20" height="17" viewBox="0 0 20 17"><path d="M2.3 0.75 H7.3 L9.2 2.7 H17.5 A1.75 1.75 0 0 1 19.25 4.45 V14.5 A1.75 1.75 0 0 1 17.5 16.25 H2.5 A1.75 1.75 0 0 1 0.75 14.5 V2.3 A1.55 1.55 0 0 1 2.3 0.75 Z" fill="#e5f4fb" stroke="#8fd6f3" stroke-width="1.4"/></svg><div class="abs" style="left:75px;top:0;line-height:36px"><span class="cn2">C8</span><span class="cc">(2)</span></div></div>
<div class="c" style="left:601px;width:102px"><svg class="abs" style="left:75px;top:6px" width="16" height="16" viewBox="0 0 16 16"><defs><radialGradient id="gg7" cx="35%" cy="30%" r="75%"><stop offset="0" stop-color="#47c48a"/><stop offset="0.55" stop-color="#2fb477"/><stop offset="1" stop-color="#079a60"/></radialGradient></defs><circle cx="8" cy="8" r="8" fill="url(#gg7)"/><path d="M4.3 8 L7 10.6 L11.8 5.6" fill="none" stroke="#fff" stroke-width="2.2" stroke-linecap="round" stroke-linejoin="round"/></svg></div>
<div class="c r" style="left:702px;width:76px;border-right:none">540</div>
</div>
<div class="tr" style="left:15px;top:387px;width:778px">
<div class="c" style="left:0;width:602px"><svg class="abs" style="left:30px;top:6px" width="26" height="20" viewBox="0 0 26 20"><path d="M2.6 0.75 H11.6 L13.6 2.9 H23.3 A1.95 1.95 0 0 1 25.25 4.85 V17.3 A1.95 1.95 0 0 1 23.3 19.25 H2.7 A1.95 1.95 0 0 1 0.75 17.3 V2.6 A1.85 1.85 0 0 1 2.6 0.75 Z" fill="#e5f4fb" stroke="#8fd6f3" stroke-width="1.4"/><circle cx="8.4" cy="9" r="2.5" fill="#fff" stroke="#86d2f1" stroke-width="1.3"/><rect x="3.4" y="13.4" width="10.2" height="3.5" rx="1.75" fill="#fff" stroke="#86d2f1" stroke-width="1.3"/><path d="M14.1 8.6 H22.6 M14.1 11.7 H22.6" stroke="#4ec3ef" stroke-width="1.3"/></svg><div class="abs" style="left:61px;top:0;line-height:36px"><b class="cn">C9</b><span class="cc">(4)</span></div></div>
<div class="c" style="left:601px;width:102px"><svg class="abs" style="left:75px;top:6px" width="16" height="16" viewBox="0 0 16 16"><defs><radialGradient id="gg8" cx="35%" cy="30%" r="75%"><stop offset="0" stop-color="#47c48a"/><stop offset="0.55" stop-color="#2fb477"/><stop offset="1" stop-color="#079a60"/></radialGradient></defs><circle cx="8" cy="8" r="8" fill="url(#gg8)"/><path d="M4.3 8 L7 10.6 L11.8 5.6" fill="none" stroke="#fff" stroke-width="2.2" stroke-linecap="round" stroke-linejoin="round"/></svg></div>
<div class="c r" style="left:702px;width:76px;border-right:none">933</div>
</div>
</div>

<div class="abs" style="left:1059px;top:933px;width:1px;height:1px;background:#7cc6dc"></div>
<div class="abs" style="left:1885px;top:997px;width:1px;height:1px;background:#7cc6dc"></div>
</body></html>
